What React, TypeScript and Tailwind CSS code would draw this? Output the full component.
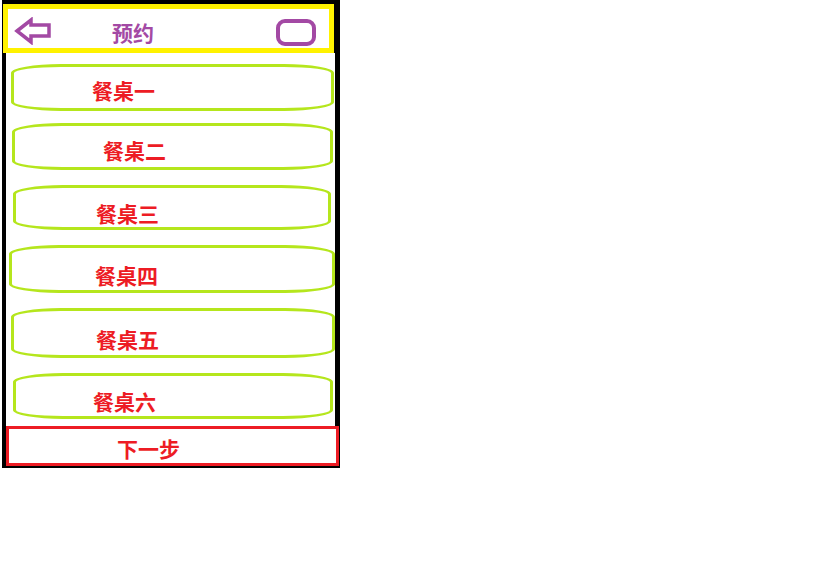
import React from "react";

const tables = [
  { name: "餐桌一", box: "ml-[5px] mt-[11px] w-[323px] h-[47px] pl-[78px] pt-[13px]" },
  { name: "餐桌二", box: "ml-[6px] mt-[12px] w-[321px] h-[47px] pl-[88px] pt-[14px]" },
  { name: "餐桌三", box: "ml-[7px] mt-[15px] w-[318px] h-[45px] pl-[80px] pt-[15px]" },
  { name: "餐桌四", box: "ml-[3px] mt-[15px] w-[326px] h-[48px] pl-[83px] pt-[17px]" },
  { name: "餐桌五", box: "ml-[5px] mt-[15px] w-[324px] h-[50px] pl-[82px] pt-[18px]" },
  { name: "餐桌六", box: "ml-[7px] mt-[15px] w-[320px] h-[46px] pl-[77px] pt-[15px]" },
];

export default function App() {
  return (
    <div className="w-[819px] h-[577px] bg-white font-['Noto_Sans_CJK_SC',sans-serif] font-bold">
      <div className="ml-[2px] w-[338px] h-[468px] bg-black flex flex-col pb-[2px]">
        {/* header */}
        <div className="mt-[4px] ml-[1px] w-[331px] h-[49px] border-[5px] border-[#fff200] bg-white flex items-start">
          <svg className="ml-[6px] mt-[8px]" width="38" height="28" viewBox="14 17 38 28">
            <path
              d="M17 31 L31 20 L31 25 L49 25 L49 36 L31 36 L31 42 Z"
              fill="none"
              stroke="#a349a4"
              strokeWidth="3.5"
              strokeLinejoin="miter"
            />
          </svg>
          <div className="ml-[60px] mt-[13px] text-[21px] leading-[21px] text-[#a349a4]">预约</div>
          <svg className="ml-auto mr-[11px] mt-[9px]" width="43" height="30" viewBox="275 18 43 30">
            <rect x="278" y="21" width="36" height="23" rx="7" fill="none" stroke="#a349a4" strokeWidth="4" />
          </svg>
        </div>
        {/* body */}
        <div className="ml-[4px] w-[329px] flex-1 bg-white flex flex-col">
          {tables.map((t) => (
            <div
              key={t.name}
              className={`${t.box} box-border border-[3px] border-[#b5e61d] rounded-[50px_/_9px]`}
            >
              <div className="text-[21px] leading-[21px] text-[#ed1c24]">{t.name}</div>
            </div>
          ))}
          <div className="mt-[7px] w-[333px] h-[40px] border-[3px] border-[#ed1c24] bg-white pl-[108px] pt-[9px]">
            <div className="text-[21px] leading-[21px] text-[#ed1c24]">下一步</div>
          </div>
        </div>
      </div>
    </div>
  );
}
